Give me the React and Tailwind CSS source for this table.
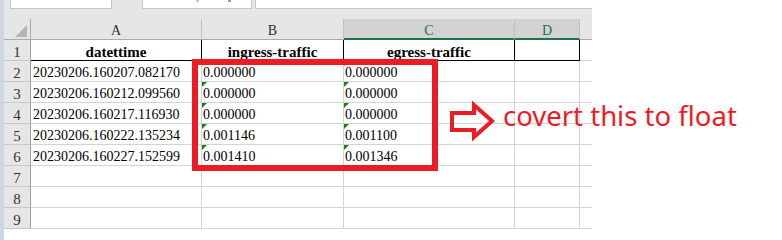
import React from 'react';

const cols = [
  { key: 'A', w: 'w-[171px]' },
  { key: 'B', w: 'w-[142px]' },
  { key: 'C', w: 'w-[171px]' },
  { key: 'D', w: 'w-[65px]' },
];

const rows = [
  ['20230206.160207.082170', '0.000000', '0.000000'],
  ['20230206.160212.099560', '0.000000', '0.000000'],
  ['20230206.160217.116930', '0.000000', '0.000000'],
  ['20230206.160222.135234', '0.001146', '0.001100'],
  ['20230206.160227.152599', '0.001410', '0.001346'],
];

const Flag = () => (
  <span className="absolute left-0 top-0 w-0 h-0 border-t-[5px] border-r-[5px] border-t-[#1a7f1a] border-r-transparent" />
);

const RowHead = ({ n }) => (
  <div className="w-[27px] h-[21px] shrink-0 bg-[#e6e6e6] border-r border-r-[#9f9f9f] border-b border-b-[#c8c8c8] text-center text-[15px] leading-[24px] text-[#333]">
    {n}
  </div>
);

const Cell = ({ w, children, flag, className = '' }) => (
  <div className={`relative ${w} h-[21px] shrink-0 border-r border-b border-[#d4d4d4] text-[14px] leading-[23px] text-black overflow-visible whitespace-nowrap ${className}`}>
    {flag && <Flag />}
    {children}
  </div>
);

export default function App() {
  return (
    <div className="relative w-[782px] h-[240px] bg-white flex overflow-hidden font-['Liberation_Serif',serif]">
      <div className="w-[4px] h-full bg-[#cdd6e4] shrink-0" />

      <div className="w-[588px] shrink-0 flex flex-col">
        <div className="h-[9px] flex bg-[#e6e6e6]">
          <div className="ml-[6px] w-[102px] bg-white border-x border-b border-[#c6c6c6] overflow-hidden">
            <div className="-mt-[12px] pl-[7px] text-[14px] leading-[14px] text-[#444] font-['Liberation_Sans',sans-serif]">C14</div>
          </div>
          <div className="ml-[30px] w-[110px] bg-white border-x border-b border-[#c6c6c6] relative">
            <span className="absolute left-[53px] top-0 w-[3px] h-[2px] bg-[#c8c8c8]" />
            <span className="absolute left-[85px] top-0 w-[3px] h-[2px] bg-[#9a9a9a]" />
          </div>
          <div className="ml-[3px] flex-1 bg-white border-l border-b border-[#c6c6c6]" />
        </div>
        <div className="h-[10px] bg-[#e6e6e6]" />

        {/* column headers */}
        <div className="flex h-[21px]">
          <div className="relative w-[27px] shrink-0 bg-[#e6e6e6] border-r border-b border-[#ababab]">
            <svg className="absolute left-[11px] top-[6px]" width="12" height="12" viewBox="0 0 12 12">
              <polygon points="12,0 12,12 0,12" fill="#b5b5b5" />
            </svg>
          </div>
          {cols.map((c) => {
            const sel = c.key === 'C' || c.key === 'D';
            return (
              <div
                key={c.key}
                className={`${c.w} shrink-0 border-r border-r-[#c0c0c0] text-center text-[14px] leading-[23px] ${
                  sel
                    ? 'bg-[#d2d2d2] border-b-2 border-b-[#217346] text-[#217346]'
                    : 'bg-[#e6e6e6] border-b border-b-[#ababab] text-[#333]'
                }`}
              >
                {c.key}
              </div>
            );
          })}
          <div className="w-[12px] shrink-0 bg-[#e6e6e6] border-b border-b-[#ababab]" />
        </div>

        {/* row 1 */}
        <div className="flex">
          <RowHead n={1} />
          <Cell w="w-[171px]" className="border-b-black border-r-black text-center font-bold text-[15px] leading-[24px]">datettime</Cell>
          <Cell w="w-[142px]" className="border-b-black border-r-black text-center font-bold text-[15px] leading-[24px]">ingress-traffic</Cell>
          <Cell w="w-[171px]" className="border-b-black border-r-black text-center font-bold text-[15px] leading-[24px]">egress-traffic</Cell>
          <Cell w="w-[65px]" className="border-b-black border-r-black" />
          <Cell w="w-[12px]" className="border-r-0" />
        </div>

        {rows.map((r, i) => (
          <div key={i} className="flex">
            <RowHead n={i + 2} />
            <Cell w="w-[171px]" className="pl-[2px]">{r[0]}</Cell>
            <Cell w="w-[142px]" className="pl-[1px]" flag>{r[1]}</Cell>
            <Cell w="w-[171px]" className="pl-[1px]" flag>{r[2]}</Cell>
            <Cell w="w-[65px]" />
            <Cell w="w-[12px]" className="border-r-0" />
          </div>
        ))}

        {[7, 8, 9].map((n) => (
          <div key={n} className="flex">
            <RowHead n={n} />
            <Cell w="w-[171px]" />
            <Cell w="w-[142px]" />
            <Cell w="w-[171px]" />
            <Cell w="w-[65px]" />
            <Cell w="w-[12px]" className="border-r-0" />
          </div>
        ))}
      </div>

      {/* annotation overlay */}
      <div className="absolute left-[192px] top-[59px] w-[246px] h-[112px] border-[6px] border-[#ed1c24]" />
      <svg className="absolute left-[440px] top-[95px]" width="60" height="50" viewBox="0 0 60 50">
        <polygon
          points="12,18 34,18 34,10 52,26 34,42 34,35 12,35"
          fill="none"
          stroke="#ed1c24"
          strokeWidth="4"
          strokeLinejoin="miter"
        />
      </svg>
      <div className="absolute left-[503px] top-[99px] text-[27.5px] leading-[34px] text-[#ed1c24] font-['Noto_Sans',sans-serif] whitespace-nowrap">
        covert this to float
      </div>
    </div>
  );
}
